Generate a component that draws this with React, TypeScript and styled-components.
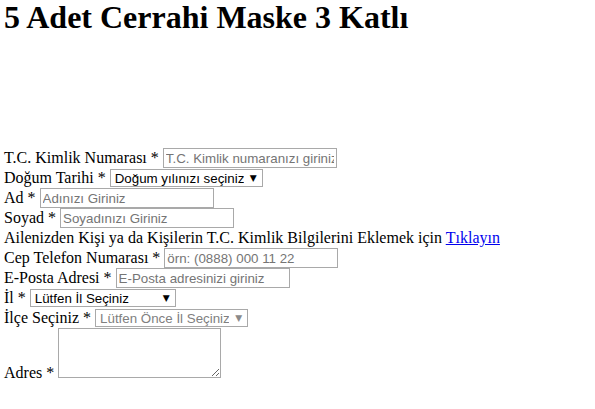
import styled, { createGlobalStyle } from 'styled-components';

const GlobalStyle = createGlobalStyle`
  html, body {
    margin: 0;
    padding: 0;
    background: #fff;
  }
  body {
    font-family: "Liberation Serif", "Times New Roman", serif;
    font-size: 16px;
    color: #000;
  }
`;

export default function App() {
  return (
    <Page>
      <GlobalStyle />
      <Title>5 Adet Cerrahi Maske 3 Katlı</Title>

      <Form>
        <Row>
          <Label>T.C. Kimlik Numarası *</Label>
          <TextInput placeholder="T.C. Kimlik numaranızı giriniz" />
        </Row>
        <Row>
          <Label>Doğum Tarihi *</Label>
          <Dropdown width={153} text="Doğum yılınızı seçiniz" />
        </Row>
        <Row>
          <Label>Ad *</Label>
          <TextInput placeholder="Adınızı Giriniz" />
        </Row>
        <Row>
          <Label>Soyad *</Label>
          <TextInput placeholder="Soyadınızı Giriniz" />
        </Row>
        <Row>
          <Label>
            Ailenizden Kişi ya da Kişilerin T.C. Kimlik Bilgilerini Eklemek için <Link href="#">Tıklayın</Link>
          </Label>
        </Row>
        <Row>
          <Label>Cep Telefon Numarası *</Label>
          <TextInput placeholder="örn: (0888) 000 11 22" />
        </Row>
        <Row>
          <Label>E-Posta Adresi *</Label>
          <TextInput placeholder="E-Posta adresinizi giriniz" />
        </Row>
        <Row>
          <Label>İl *</Label>
          <Dropdown width={146} text="Lütfen İl Seçiniz" />
        </Row>
        <Row>
          <Label>İlçe Seçiniz *</Label>
          <Dropdown width={153} text="Lütfen Önce İl Seçiniz" disabled />
        </Row>
        <AddressRow>
          <AddressLabel>Adres *</AddressLabel>
          <AddressBox />
        </AddressRow>
      </Form>
    </Page>
  );
}

function Dropdown({ width, text, disabled }: { width: number; text: string; disabled?: boolean }) {
  return (
    <SelectWrap>
      <Select $width={width} disabled={disabled} defaultValue="">
        <option value="">{text}</option>
      </Select>
      <Arrow $disabled={disabled}>▼</Arrow>
    </SelectWrap>
  );
}

const Page = styled.div`
  padding: 0 4px;
`;

const Title = styled.h1`
  margin: 0;
  font-size: 32px;
  font-weight: 700;
  line-height: 35px;
`;

const Form = styled.form`
  margin-top: 113px;
  display: flex;
  flex-direction: column;
`;

const Row = styled.div`
  height: 20px;
  display: flex;
  align-items: center;
  gap: 4px;
  white-space: nowrap;
`;

const Label = styled.span`
  line-height: 18px;
`;

const Link = styled.a`
  color: #0000ee;
  text-decoration: underline;
`;

const TextInput = styled.input`
  box-sizing: border-box;
  width: 174px;
  height: 20px;
  margin: 0;
  padding: 0 2px;
  border: 1px solid #a9a9a9;
  border-radius: 0;
  font-family: "Liberation Sans", Arial, sans-serif;
  font-size: 13.33px;
  color: #000;
  outline: none;

  &::placeholder {
    color: #757575;
  }
`;

const SelectWrap = styled.span`
  position: relative;
  display: inline-flex;
`;

const Select = styled.select<{ $width: number }>`
  box-sizing: border-box;
  width: ${(p) => p.$width}px;
  height: 18px;
  margin: 0;
  padding: 0 18px 0 4px;
  appearance: none;
  border: 1px solid #a9a9a9;
  border-radius: 0;
  background: #fff;
  font-family: "Liberation Sans", Arial, sans-serif;
  font-size: 13.33px;
  color: #000;

  &:disabled {
    color: #808080;
    opacity: 1;
  }
`;

const Arrow = styled.span<{ $disabled?: boolean }>`
  position: absolute;
  right: 6px;
  top: 50%;
  transform: translateY(-50%);
  font-family: "DejaVu Sans", sans-serif;
  font-size: 9px;
  line-height: 1;
  color: ${(p) => (p.$disabled ? '#8a8a8a' : '#000')};
  pointer-events: none;
`;

const AddressRow = styled.div`
  display: flex;
  align-items: flex-end;
  gap: 4px;
`;

const AddressLabel = styled.span`
  line-height: 16px;
  margin-bottom: -3px;
`;

const AddressBox = styled.textarea`
  box-sizing: border-box;
  width: 163px;
  height: 50px;
  margin: 0;
  padding: 2px;
  border: 1px solid #a9a9a9;
  border-radius: 0;
  font-family: "Liberation Mono", monospace;
  font-size: 13.33px;
`;
